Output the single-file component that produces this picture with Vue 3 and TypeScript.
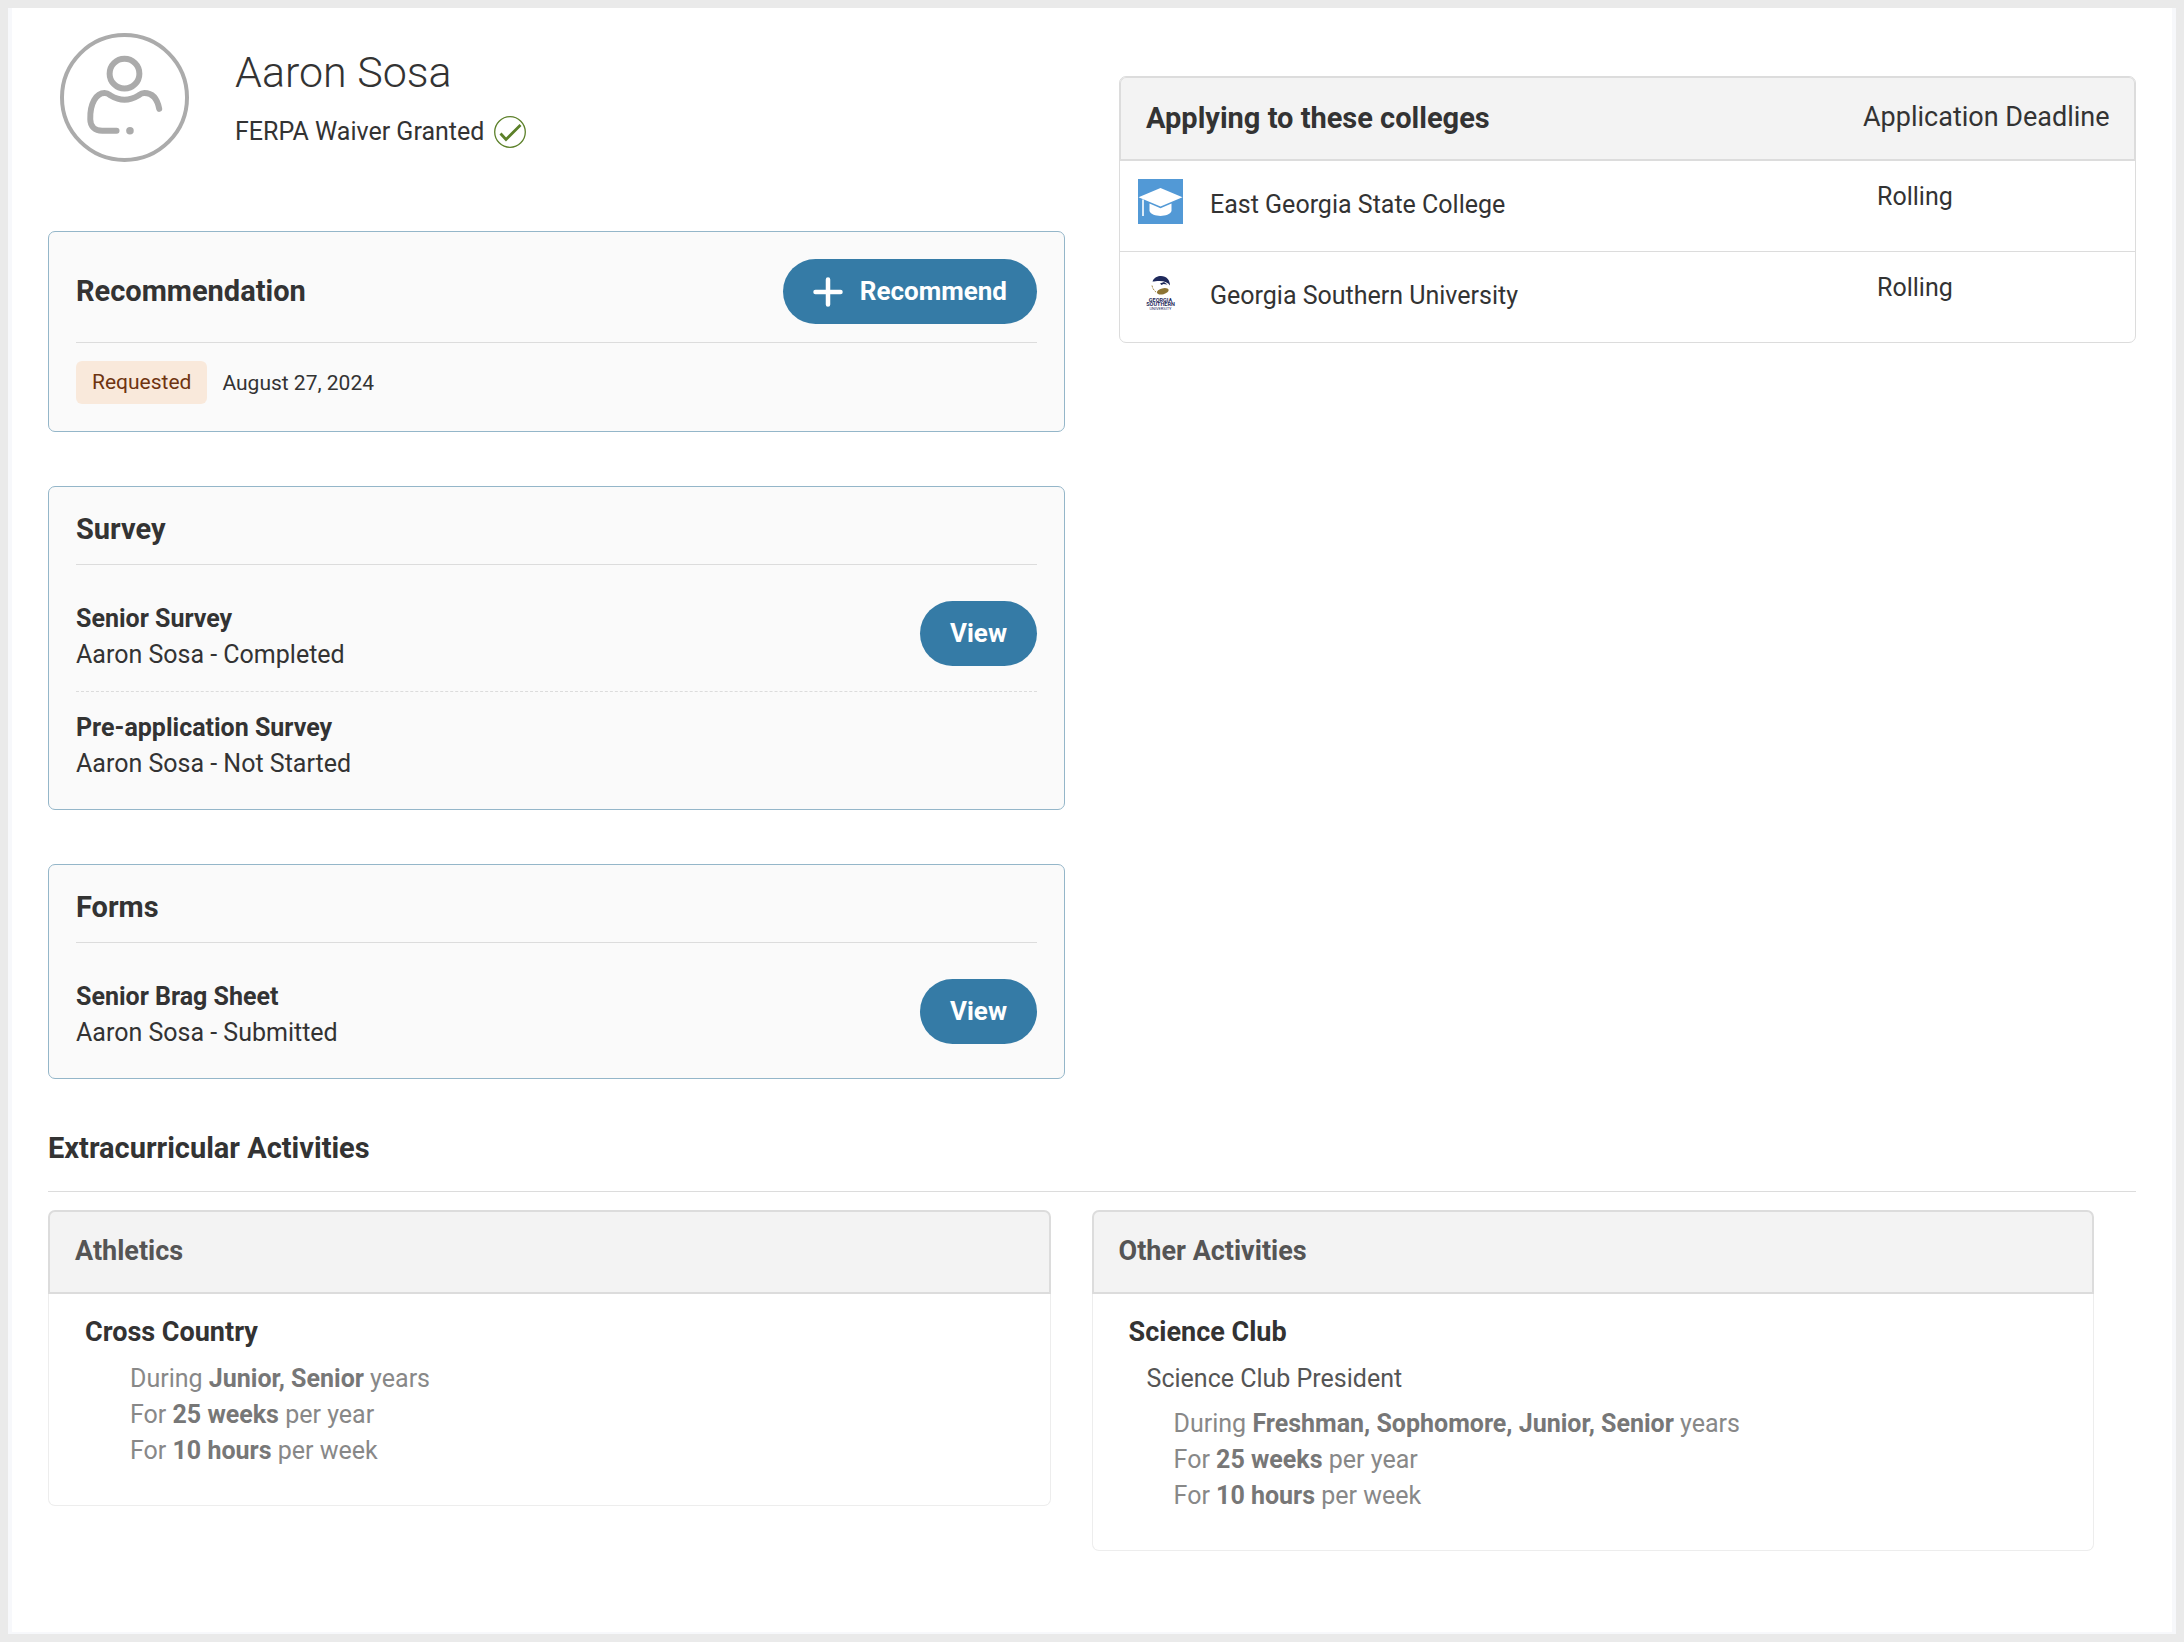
<script setup lang="ts">
interface Entry {
  title: string
  status: string
  viewable: boolean
}

interface Section {
  heading: string
  entries: Entry[]
}

interface Activity {
  group: string
  name: string
  role?: string
  years: string
  weeks: number
  hours: number
}

const student = 'Aaron Sosa'

const sections: Section[] = [
  {
    heading: 'Survey',
    entries: [
      { title: 'Senior Survey', status: 'Completed', viewable: true },
      { title: 'Pre-application Survey', status: 'Not Started', viewable: false },
    ],
  },
  {
    heading: 'Forms',
    entries: [{ title: 'Senior Brag Sheet', status: 'Submitted', viewable: true }],
  },
]

const colleges = [
  { name: 'East Georgia State College', deadline: 'Rolling', logo: 'cap' },
  { name: 'Georgia Southern University', deadline: 'Rolling', logo: 'southern' },
]

const activities: Activity[] = [
  { group: 'Athletics', name: 'Cross Country', years: 'Junior, Senior', weeks: 25, hours: 10 },
  {
    group: 'Other Activities',
    name: 'Science Club',
    role: 'Science Club President',
    years: 'Freshman, Sophomore, Junior, Senior',
    weeks: 25,
    hours: 10,
  },
]
</script>

<template>
  <main class="page">
    <div class="columns">
      <div class="column">
        <header class="profile">
          <svg class="avatar" viewBox="0 0 130 130" fill="none" stroke="#ababab" aria-hidden="true">
            <circle cx="65" cy="65" r="63" stroke-width="4" />
            <circle cx="65" cy="41" r="15" stroke-width="6" />
            <path
              d="M57 98.500H42.500C35 98.500 30.500 94 30.500 87C30 71 36.500 60.500 45 60.500C48 60.500 49 61.500 51 63C60 68.500 70 68.500 79 63C81 61.500 82 60.500 85 60.500C93 60.500 98 66 100 76.500"
              stroke-width="6"
              stroke-linecap="round"
              stroke-linejoin="round"
            />
            <circle cx="70.500" cy="98.500" r="3.800" fill="#ababab" stroke="none" />
          </svg>
          <div class="identity">
            <h1 class="name">{{ student }}</h1>
            <p class="waiver">
              FERPA Waiver Granted
              <svg class="check" viewBox="0 0 32 32" fill="none" stroke="#5c8029" aria-hidden="true">
                <circle cx="16" cy="16" r="15.300" stroke-width="1.300" />
                <path d="M6.500 17.500L12 23.500L26.500 9" stroke-width="2.800" />
              </svg>
            </p>
          </div>
        </header>

        <section class="card">
          <div class="card-head">
            <h2 class="heading">Recommendation</h2>
            <button type="button" class="button">
              <svg class="plus" viewBox="0 0 30 30" stroke="#fff" stroke-width="4.500" stroke-linecap="round" aria-hidden="true">
                <path d="M15 2.500V27.500M2.500 15H27.500" />
              </svg>
              <span class="button-label">Recommend</span>
            </button>
          </div>
          <div class="request">
            <span class="badge">Requested</span>
            <span>August 27, 2024</span>
          </div>
        </section>

        <section v-for="section in sections" :key="section.heading" class="card">
          <div class="card-head">
            <h2 class="heading">{{ section.heading }}</h2>
          </div>
          <ul class="entries">
            <li v-for="entry in section.entries" :key="entry.title" class="entry">
              <div>
                <h3 class="entry-title">{{ entry.title }}</h3>
                <p>{{ student }} - {{ entry.status }}</p>
              </div>
              <button v-if="entry.viewable" type="button" class="button">
                <span class="button-label">View</span>
              </button>
            </li>
          </ul>
        </section>
      </div>

      <div class="column colleges">
        <table class="college-table">
          <thead>
            <tr>
              <th scope="col" class="heading">Applying to these colleges</th>
              <th scope="col" class="deadline-head">Application Deadline</th>
            </tr>
          </thead>
          <tbody>
            <tr v-for="college in colleges" :key="college.name">
              <td>
                <div class="college">
                  <svg v-if="college.logo === 'cap'" class="logo" viewBox="0 0 45 45" aria-hidden="true">
                    <rect width="45" height="45" fill="#5299d6" />
                    <path d="M22.500 9L44.500 18.300L22.500 27.500L.5 18.300Z" fill="#fff" />
                    <path d="M11.500 24.500L22.500 29.300L33.500 24.500V32C31 38.500 14 38.500 11.500 32Z" fill="#fff" />
                    <path d="M5 20.500V37" stroke="#fff" stroke-opacity=".8" stroke-width="2" />
                  </svg>
                  <svg v-else class="logo" viewBox="0 0 45 45" aria-hidden="true">
                    <path d="M14.500 11.500C16 7.500 19.500 6 23 6C28.500 6 32 10 32 15.500C30 12.500 26 10.800 21 11C18.500 11 16.500 11.500 14.500 11.500Z" fill="#1f2a5c" />
                    <path d="M22 13.500L26 12L29.500 14.500L25.500 14L23.500 15Z" fill="#1f2a5c" />
                    <path d="M14 15.500C14.500 18.500 16 20.500 18.500 22.500" stroke="#a58a4a" stroke-width="1" stroke-dasharray="2 1" fill="none" />
                    <ellipse cx="24.800" cy="21.300" rx="6" ry="3" transform="rotate(-14 24.800 21.300)" fill="#8d7434" />
                    <g fill="#1f2a5c" text-anchor="middle" font-family="Roboto, sans-serif" font-weight="700">
                      <text x="22.500" y="31.500" font-size="5.500">GEORGIA</text>
                      <text x="22.500" y="36.300" font-size="5.500">SOUTHERN</text>
                      <text x="22.500" y="40" font-size="4" font-weight="400">UNIVERSITY</text>
                    </g>
                  </svg>
                  {{ college.name }}
                </div>
              </td>
              <td class="deadline">{{ college.deadline }}</td>
            </tr>
          </tbody>
        </table>
      </div>
    </div>

    <h2 class="heading extracurricular">Extracurricular Activities</h2>

    <div class="activities">
      <section v-for="activity in activities" :key="activity.group" class="activity">
        <h3 class="activity-group">{{ activity.group }}</h3>
        <div class="activity-body">
          <h4 class="activity-name">{{ activity.name }}</h4>
          <p v-if="activity.role" class="activity-role">{{ activity.role }}</p>
          <div class="activity-facts">
            <p>During <strong>{{ activity.years }}</strong> years</p>
            <p>For <strong>{{ activity.weeks }} weeks</strong> per year</p>
            <p>For <strong>{{ activity.hours }} hours</strong> per week</p>
          </div>
        </div>
      </section>
    </div>
  </main>
</template>

<style>
body {
  margin: 0;
  background: #fff;
}
</style>

<style scoped>
.page,
.page * {
  box-sizing: border-box;
}

.page {
  min-height: 100vh;
  padding: 25px 40px 80px;
  border: 8px solid #eaeaea;
  box-shadow: inset 4px 0 #f7f8fb, inset -4px 0 #f7f8fb, inset 0 -2px #f7f8fb;
  color: #333;
  font: 400 25px/36px Roboto, sans-serif;
}

h1,
h2,
h3,
h4,
p,
ul {
  margin: 0;
  padding: 0;
  font-size: inherit;
}

.columns {
  display: grid;
  grid-template-columns: 1fr 1fr;
  gap: 54px;
}

.column {
  display: flex;
  flex-direction: column;
  gap: 54px;
}

.profile {
  display: flex;
  gap: 46px;
  height: 144px;
  padding-left: 12px;
}

.avatar {
  width: 129px;
  height: 129px;
}

.name {
  margin-top: 13px;
  font-size: 43px;
  font-weight: 300;
  line-height: 52px;
}

.waiver {
  display: flex;
  align-items: center;
  gap: 10px;
  margin-top: 16px;
}

.check {
  width: 32px;
  height: 32px;
}

.card {
  padding: 27px;
  border: 1px solid #94b6c9;
  border-radius: 7px;
  background: #fafafa;
}

.card-head {
  display: flex;
  align-items: center;
  justify-content: space-between;
  padding-bottom: 18px;
  border-bottom: 1px solid #dcdcdc;
}

.heading {
  padding-bottom: 2px;
  font-size: 29px;
  font-weight: 700;
  line-height: 30px;
}

.button {
  display: flex;
  align-items: center;
  gap: 17px;
  height: 65px;
  padding: 0 30px;
  border: 0;
  border-radius: 33px;
  background: #357ba6;
  color: #fff;
  font: 700 26px/36px Roboto, sans-serif;
  cursor: pointer;
}

.button-label {
  padding-bottom: 2px;
}

.plus {
  width: 30px;
  height: 30px;
}

.request {
  display: flex;
  align-items: center;
  gap: 15px;
  padding-top: 18px;
  font-size: 21px;
}

.badge {
  padding: 0 16px;
  border-radius: 6px;
  background: #f9e9db;
  color: #6f3410;
  line-height: 43px;
}

.entries {
  padding-top: 18px;
  list-style: none;
}

.entry {
  display: flex;
  align-items: flex-start;
  justify-content: space-between;
  padding: 18px 0;
}

.entry + .entry {
  border-top: 1px dashed #dcdcdc;
}

.entry:last-child {
  padding-bottom: 0;
}

.entry-title {
  font-weight: 700;
}

.colleges {
  padding-top: 43px;
}

.college-table {
  width: 100%;
  border: 1px solid #dcdcdc;
  border-radius: 7px;
  border-spacing: 0;
}

.college-table th {
  height: 84px;
  padding: 0 25px 2px;
  border-top: 1px solid #dcdcdc;
  border-bottom: 2px solid #dcdcdc;
  background: #f3f3f3;
  text-align: left;
}

.college-table th:first-child {
  border-left: 1px solid #dcdcdc;
  border-top-left-radius: 6px;
}

.college-table th:last-child {
  border-right: 1px solid #dcdcdc;
  border-top-right-radius: 6px;
}

.college-table .deadline-head {
  width: 272px;
  padding: 0 0 4px;
  font-size: 27px;
  font-weight: 400;
  white-space: nowrap;
}

.college-table td {
  height: 90px;
  padding: 18px;
  vertical-align: top;
}

.college-table .deadline {
  padding-left: 14px;
}

.college-table tr + tr td {
  height: 91px;
  border-top: 1px solid #dcdcdc;
}

.college {
  display: flex;
  gap: 27px;
  line-height: 52px;
}

.logo {
  width: 45px;
  height: 45px;
}

.extracurricular {
  margin-top: 54px;
  padding-bottom: 28px;
  border-bottom: 1px solid #dcdcdc;
}

.activities {
  display: grid;
  grid-template-columns: 1fr 1fr;
  align-items: start;
  gap: 2%;
  margin-top: 18px;
  padding-right: 2%;
}

.activity-group {
  height: 84px;
  padding: 21px 25px;
  border: 2px solid #dcdcdc;
  border-radius: 7px 7px 0 0;
  background: #f3f3f3;
  color: #555;
  font-size: 27px;
  font-weight: 700;
}

.activity-body {
  padding: 20px 36px 36px;
  border: 1px solid #ededed;
  border-top: 0;
  border-radius: 0 0 7px 7px;
}

.activity-name {
  margin-bottom: 11px;
  font-size: 27px;
  font-weight: 700;
}

.activity-role {
  margin-bottom: 9px;
  padding-left: 18px;
  color: #555;
}

.activity-facts {
  padding-left: 45px;
  color: #888;
}

.activity-facts strong {
  color: #777;
  font-weight: 700;
}
</style>
